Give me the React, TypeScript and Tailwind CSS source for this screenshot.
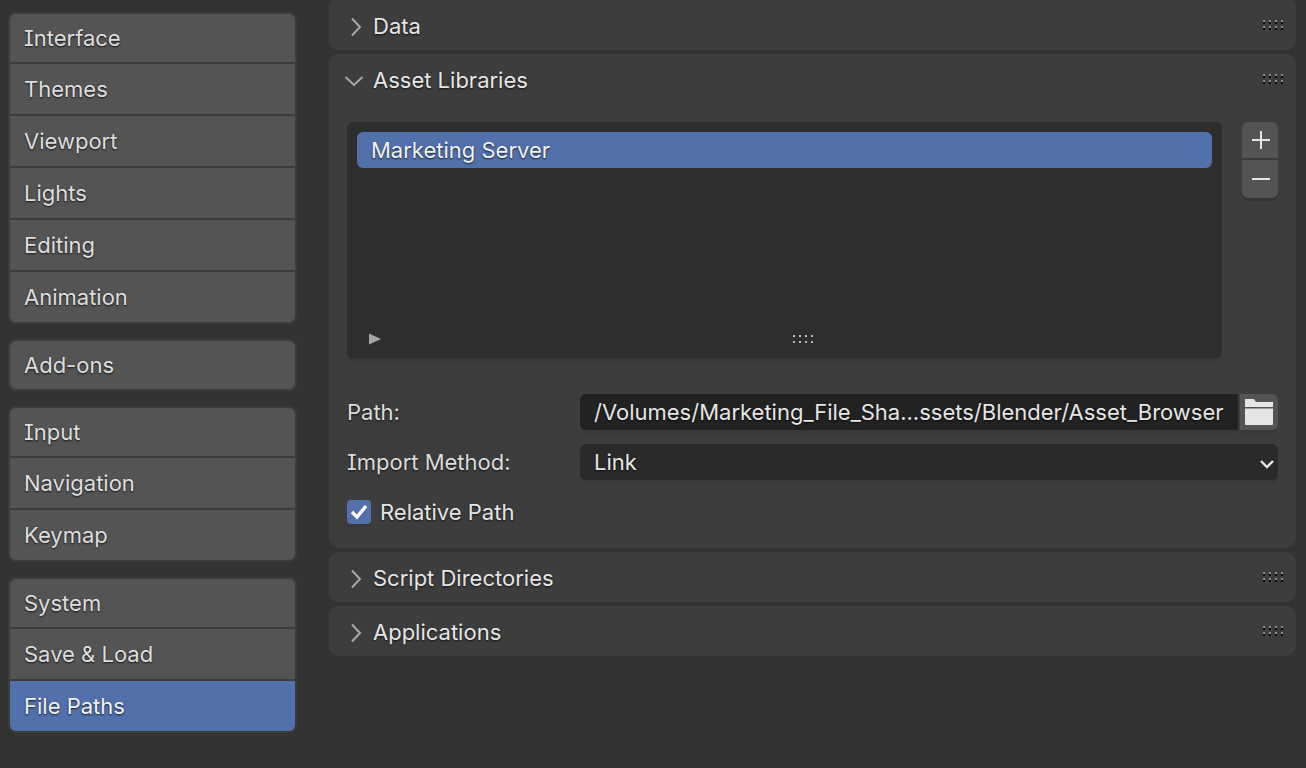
import React from "react";

const shadow = "[text-shadow:0_1px_2px_rgba(0,0,0,0.75)]";

function NavGroup({ items, active, className }: { items: string[]; active?: string; className?: string }) {
  return (
    <div className={`flex flex-col gap-[2px] rounded-[8px] border-2 border-[#3c3c3c] bg-[#3c3c3c] overflow-hidden ${className ?? ""}`}>
      {items.map((item) => (
        <div
          key={item}
          className={`flex h-[50px] first:h-[48px] items-center pl-[14px] text-[22px] ${shadow} ${
            item === active ? "bg-[#5170ac] text-[#f2f2f2]" : "bg-[#545454] text-[#dedede]"
          }`}
        >
          {item}
        </div>
      ))}
    </div>
  );
}

function Grip() {
  // the little dotted drag handle in panel headers
  const xs = [0, 6, 12, 18];
  return (
    <svg width="20" height="10" viewBox="0 0 20 10" className="shrink-0">
      {xs.map((x) =>
        [0, 6].map((y) => (
          <g key={`${x}-${y}`}>
            <rect x={x} y={y} width="2" height="2" fill="#8c8c8c" />
            <rect x={x} y={y + 2} width="2" height="2" fill="#0c0c0c" />
          </g>
        ))
      )}
    </svg>
  );
}

function Chevron({ open }: { open?: boolean }) {
  return open ? (
    <svg width="20" height="12" viewBox="0 0 20 12" fill="none" stroke="#a8a8a8" strokeWidth="2" className="ml-[15px] shrink-0">
      <path d="M1.5 2 L10 10 L18.5 2" />
    </svg>
  ) : (
    <svg width="12" height="20" viewBox="0 0 12 20" fill="none" stroke="#a8a8a8" strokeWidth="2" className="ml-[21px] shrink-0">
      <path d="M2 1.5 L10 10 L2 18.5" />
    </svg>
  );
}

function PanelHeader({ title, open }: { title: string; open?: boolean }) {
  return (
    <div className="flex h-[50px] items-center pr-[13px] pt-[3px]">
      <Chevron open={open} />
      <span className={`text-[22px] text-[#e6e6e6] ${shadow} ${open ? "ml-[9px]" : "ml-[11px]"}`}>{title}</span>
      <div className="ml-auto -mt-[4px]">
        <Grip />
      </div>
    </div>
  );
}

export default function App() {
  return (
    <div
      className="flex h-[768px] w-[1306px] overflow-hidden bg-[#333333] [font-feature-settings:'cv08']"
      style={{ fontFamily: "Inter, 'Noto Sans', sans-serif" }}
    >
      {/* left nav */}
      <div className="ml-[8px] mt-[12px] flex w-[289px] shrink-0 flex-col">
        <NavGroup items={["Interface", "Themes", "Viewport", "Lights", "Editing", "Animation"]} />
        <NavGroup items={["Add-ons"]} className="mt-[15px]" />
        <NavGroup items={["Input", "Navigation", "Keymap"]} className="mt-[15px]" />
        <NavGroup items={["System", "Save & Load", "File Paths"]} active="File Paths" className="mt-[15px]" />
      </div>

      {/* main panels */}
      <div className="ml-[32px] flex w-[967px] shrink-0 flex-col gap-[4px]">
        <div className="-mt-[3px] rounded-[10px] bg-[#3d3d3d] pt-[3px]">
          <PanelHeader title="Data" />
        </div>

        <div className="h-[494px] rounded-[10px] bg-[#3d3d3d]">
          <PanelHeader title="Asset Libraries" open />

          <div className="mt-[18px] flex pl-[18px] pr-[18px]">
            <div className="flex h-[236px] w-[875px] flex-col rounded-[6px] bg-[#2e2e2e] p-[10px] pb-0 shadow-[0_3px_0_#383838]">
              <div className={`flex h-[36px] items-center rounded-[6px] bg-[#5170ac] pl-[14px] pt-[1px] text-[22px] text-[#f2f2f2] ${shadow}`}>
                Marketing Server
              </div>
              <div className="mt-auto flex h-[39px] items-center">
                <svg width="12" height="12" viewBox="0 0 12 12" className="ml-[12px]">
                  <path d="M0 0.5 L12 6 L0 11.5 Z" fill="#a6a6a6" />
                </svg>
                <svg width="22" height="8" viewBox="0 0 22 8" className="ml-[412px]">
                  {[0, 6, 12, 18].map((x) => (
                    <g key={x}>
                      <rect x={x} y="0" width="2" height="2" fill="#b8b8b8" />
                      <rect x={x} y="6" width="2" height="2" fill="#b8b8b8" />
                    </g>
                  ))}
                </svg>
              </div>
            </div>

            <div className="ml-[20px] flex h-[76px] w-[36px] flex-col gap-[2px] overflow-hidden rounded-[6px] bg-[#3a3a3a] shadow-[0_3px_0_#353535]">
              <div className="flex h-[36px] items-center justify-center bg-[#545454] pl-[2px]">
                <svg width="18" height="18" viewBox="0 0 18 18" stroke="#e6e6e6" strokeWidth="2">
                  <path d="M0 9 H18 M9 0 V18" />
                </svg>
              </div>
              <div className="flex h-[38px] items-center justify-center bg-[#545454] pl-[2px]">
                <svg width="18" height="4" viewBox="0 0 18 4" stroke="#e6e6e6" strokeWidth="2">
                  <path d="M0 2 H18" />
                </svg>
              </div>
            </div>
          </div>

          <div className="mt-[36px] flex h-[36px] items-center pl-[18px] pr-[18px]">
            <span className={`w-[233px] pt-[1px] text-[22px] text-[#dcdcdc] ${shadow}`}>Path:</span>
            <div className={`flex h-[36px] w-[658px] items-center rounded-l-[6px] bg-[#222222] pl-[14px] pt-[1px] text-[22px] text-[#e6e6e6] shadow-[0_3px_0_#383838] ${shadow}`}>
              /Volumes/Marketing_File_Sha...ssets/Blender/Asset_Browser
            </div>
            <div className="ml-[2px] flex h-[36px] w-[38px] items-center justify-center rounded-r-[6px] bg-[#545454] shadow-[0_3px_0_#383838]">
              <svg width="28" height="26" viewBox="0 0 28 26" fill="#e6e6e6">
                <path d="M0 0 H9 L11 3 H28 V8 H0 Z" />
                <path d="M0 9.5 H28 V25 Q28 26 27 26 H1 Q0 26 0 25 Z" />
              </svg>
            </div>
          </div>

          <div className="mt-[14px] flex h-[36px] items-center pl-[18px] pr-[18px]">
            <span className={`w-[233px] pt-[1px] text-[22px] text-[#dcdcdc] ${shadow}`}>Import Method:</span>
            <div className={`flex h-[36px] w-[698px] items-center justify-between rounded-[6px] bg-[#2a2a2a] pl-[14px] pr-[4px] pt-[1px] text-[22px] text-[#e6e6e6] shadow-[0_3px_0_#383838] ${shadow}`}>
              Link
              <svg width="14" height="10" viewBox="0 0 14 10" fill="none" stroke="#e6e6e6" strokeWidth="2.4" className="mt-[3px]">
                <path d="M1 2 L7 8 L13 2" />
              </svg>
            </div>
          </div>

          <div className="mt-[14px] flex h-[36px] items-center pl-[18px]">
            <div className="flex h-[24px] w-[24px] items-center justify-center rounded-[4px] bg-[#5170ac] shadow-[0_3px_0_#383838]">
              <svg width="18" height="16" viewBox="0 0 18 16" fill="none" stroke="#ffffff" strokeWidth="3.4">
                <path d="M2 8 L7 13 L16 2" />
              </svg>
            </div>
            <span className={`ml-[9px] pt-[1px] text-[22px] text-[#e6e6e6] ${shadow}`}>Relative Path</span>
          </div>
        </div>

        <div className="rounded-[10px] bg-[#3d3d3d]">
          <PanelHeader title="Script Directories" />
        </div>
        <div className="rounded-[10px] bg-[#3d3d3d]">
          <PanelHeader title="Applications" />
        </div>
      </div>
    </div>
  );
}
